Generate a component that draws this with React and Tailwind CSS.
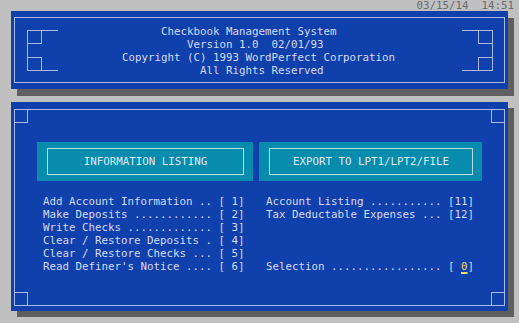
import React from "react";

function Bracket({ flip }) {
  return (
    <svg
      width="31"
      height="41"
      viewBox="0 0 31 41"
      className={flip ? "shrink-0 mt-[12px] -scale-x-100" : "shrink-0 mt-[12px]"}
    >
      <g stroke="#a9b9e8" strokeWidth="1" fill="none" shapeRendering="crispEdges">
        <path d="M0.5 0.5 V40.5" />
        <path d="M0 0.5 H31" />
        <path d="M0 40.5 H31" />
        <path d="M14.5 0.5 V13.5 H0" />
        <path d="M0 27.5 H14.5 V40.5" />
      </g>
    </svg>
  );
}

function Corner({ pos }) {
  return (
    <div
      className={
        "absolute w-[14px] h-[14px] border border-[#a9b9e8] " + pos
      }
    />
  );
}

const left = [
  "Add Account Information .. [ 1]",
  "Make Deposits ............ [ 2]",
  "Write Checks ............. [ 3]",
  "Clear / Restore Deposits . [ 4]",
  "Clear / Restore Checks ... [ 5]",
  "Read Definer's Notice .... [ 6]",
];

export default function App() {
  return (
    <div className="w-[519px] h-[323px] bg-[#c0c0c0] overflow-hidden font-['DejaVu_Sans_Mono',monospace] text-[10.8px] leading-[13px] text-[#d6dbf0]">
      <div className="h-[11px] leading-[11px] text-right pr-[5px] text-[#6a6a6a] whitespace-pre">
        03/15/14  14:51
      </div>

      <div className="ml-[11px] w-[497px] h-[78px] bg-[#1040ac] shadow-[6px_7px_0_#5f5f5f] pt-[6px] px-[3px]">
        <div className="h-[66px] border border-[#a9b9e8] flex items-start pl-[12px] pr-[11px]">
          <Bracket />
          <div className="flex-1 ml-[64px] mt-[7px] whitespace-pre">
            {"      Checkbook Management System\n"}
            {"          Version 1.0  02/01/93\n"}
            {"Copyright (C) 1993 WordPerfect Corporation\n"}
            {"            All Rights Reserved"}
          </div>
          <Bracket flip />
        </div>
      </div>

      <div className="mt-[13px] ml-[11px] w-[497px] h-[209px] bg-[#1040ac] shadow-[6px_6px_0_#5f5f5f] pt-[7px] px-[3px]">
        <div className="relative h-[197px] border border-[#a9b9e8]">
          <Corner pos="-top-px -left-px" />
          <Corner pos="-top-px -right-px" />
          <Corner pos="-bottom-px -left-px" />
          <Corner pos="-bottom-px -right-px" />

          <div className="flex gap-[6px] ml-[22px] mt-[32px]">
            <div className="w-[216px] h-[39px] bg-[#088cae] pt-[6px] pb-[6px] pl-[10px] pr-[9px] flex">
              <div className="flex-1 border border-[#b6dde8] flex items-center justify-center text-[#dbe9f2]">
                INFORMATION LISTING
              </div>
            </div>
            <div className="w-[223px] h-[39px] bg-[#088cae] pt-[6px] pb-[6px] pl-[10px] pr-[9px] flex">
              <div className="flex-1 border border-[#b6dde8] flex items-center justify-center text-[#dbe9f2]">
                EXPORT TO LPT1/LPT2/FILE
              </div>
            </div>
          </div>

          <div className="flex ml-[28px] mt-[14px] whitespace-pre">
            <div className="w-[223px]">
              {left.map((l) => (
                <div key={l} className="h-[13px]">
                  {l}
                </div>
              ))}
            </div>
            <div>
              <div className="h-[13px]">Account Listing ........... [11]</div>
              <div className="h-[13px]">Tax Deductable Expenses ... [12]</div>
              <div className="h-[13px]" />
              <div className="h-[13px]" />
              <div className="h-[13px]" />
              <div className="h-[13px]">
                {"Selection ................. [ "}
                <span className="text-[#f0dc6a] underline decoration-2 underline-offset-[2px] decoration-[#f0dc6a]">
                  0
                </span>
                {"]"}
              </div>
            </div>
          </div>
        </div>
      </div>
    </div>
  );
}
